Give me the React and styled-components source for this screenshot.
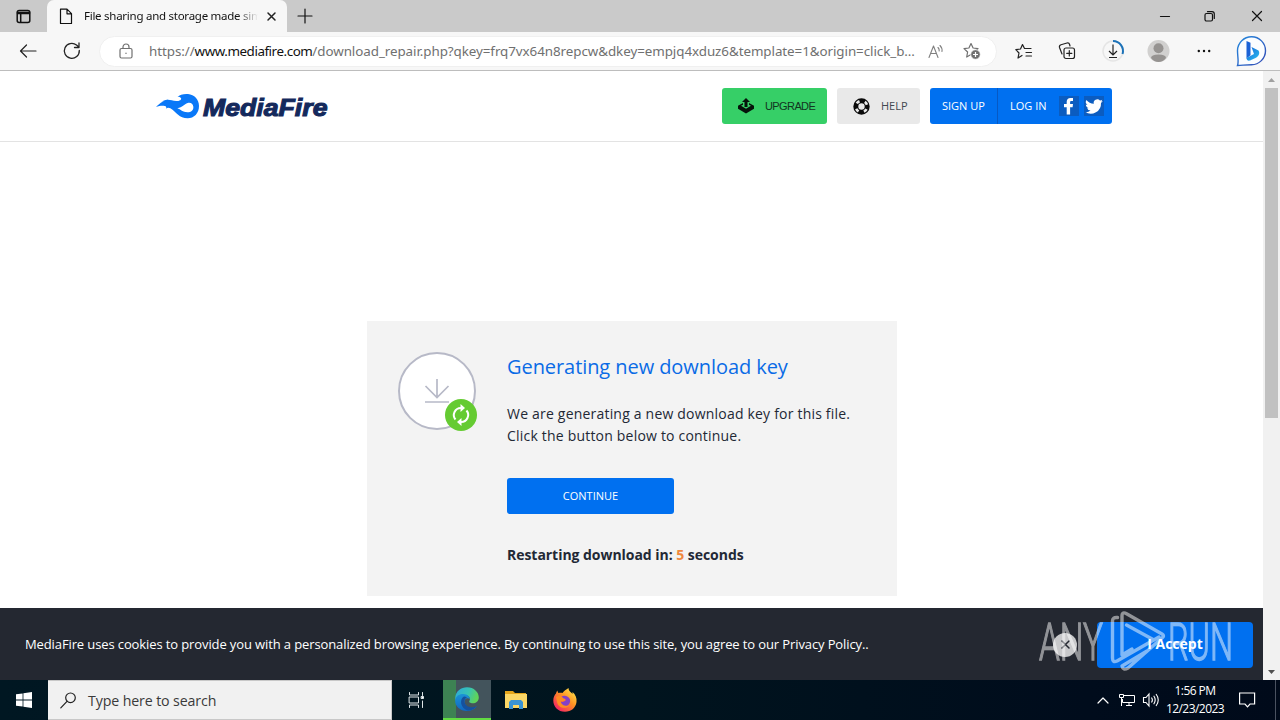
import React from 'react';
import styled, { createGlobalStyle } from 'styled-components';

const GlobalStyle = createGlobalStyle`
  * {
    box-sizing: border-box;
  }

  body {
    margin: 0;
    overflow: hidden;
    font-family: 'Open Sans', 'Noto Sans', sans-serif;
    background: #fff;
  }

  svg {
    display: block;
    flex: none;
    overflow: visible;
  }

  button {
    font: inherit;
    border: 0;
    padding: 0;
  }
`;

const Desktop = styled.div`
  position: relative;
  width: 1280px;
  height: 720px;
  display: flex;
  flex-direction: column;
  overflow: hidden;
`;

/* Text fitted to a line by letter spacing */
const Label = styled.span`
  font-family: ${({ $family }) => $family || 'inherit'};
  font-size: ${({ $size }) => $size}px;
  font-weight: ${({ $weight }) => $weight || 400};
  letter-spacing: ${({ $track }) => $track || 0}px;
  color: ${({ $color }) => $color || 'inherit'};
  padding-bottom: ${({ $lift }) => $lift || 0}px;
  white-space: nowrap;
`;

// ---------- Browser chrome ----------

const TabStrip = styled.div`
  height: 32px;
  flex: none;
  display: flex;
  background: #cacaca;
`;

const TabActions = styled.div`
  width: 47px;
  display: flex;
  align-items: center;
  padding-left: 16px;
`;

const Tab = styled.div`
  width: 240px;
  height: 32px;
  display: flex;
  align-items: center;
  padding-left: 12px;
  background: #f7f7f7;
  border-radius: 7px 7px 0 0;
`;

const TabTitle = styled.div`
  width: 174px;
  margin: 0 9px 0 11px;
  overflow: hidden;
  font-family: 'Noto Sans', sans-serif;
  font-size: 11.5px;
  line-height: 18px;
  letter-spacing: -0.26px;
  white-space: nowrap;
  color: #111;
  mask-image: linear-gradient(90deg, #000 88%, transparent 100%);
`;

const NewTab = styled.div`
  padding: 8px 0 0 10px;
`;

const WindowButtons = styled.div`
  margin-left: auto;
  display: flex;
  align-items: center;
  gap: 30px;
  padding-right: 16px;
`;

const Toolbar = styled.div`
  height: 39px;
  flex: none;
  display: flex;
  align-items: center;
  background: #f7f7f7;
  border-bottom: 1px solid #bdbdbd;
`;

const NavButtons = styled.div`
  width: 99px;
  display: flex;
  align-items: center;
  gap: 26px;
  padding-left: 19px;
`;

const AddressBar = styled.div`
  width: 898px;
  height: 31px;
  display: flex;
  align-items: center;
  padding: 0 13px 0 19px;
  background: #fff;
  border: 1px solid #f0f0f0;
  border-radius: 16px;
`;

const Url = styled.div`
  width: 768px;
  margin: 0 12px 0 16px;
  font-family: 'Noto Sans', sans-serif;
  font-size: 13.4px;
  line-height: 20px;
  letter-spacing: -0.07px;
  white-space: nowrap;
  color: #707070;

  b {
    font-weight: 400;
    letter-spacing: -0.45px;
    color: #111;
  }
`;

const ToolbarIcons = styled.div`
  flex: 1;
  display: flex;
  align-items: center;
  justify-content: space-between;
  padding: 0 13px 0 18px;
`;

// ---------- Page ----------

const Viewport = styled.div`
  height: 609px;
  flex: none;
  display: flex;
`;

const Page = styled.div`
  width: 1263px;
  display: flex;
  flex-direction: column;
  background: #fff;
`;

const Header = styled.header`
  height: 71px;
  flex: none;
  display: flex;
  align-items: center;
  padding: 0 151px 0 155px;
  border-bottom: 1px solid #e3e3e3;
`;

const LogoSlot = styled.a`
  padding-bottom: 1px;
`;

const HeaderButtons = styled.div`
  margin-left: auto;
  display: flex;
  gap: 10px;
`;

const HeaderButton = styled.button`
  width: ${({ $width }) => $width}px;
  height: 36px;
  display: flex;
  align-items: center;
  gap: 11px;
  padding-left: 16px;
  border-radius: 3px;
  background: ${({ $bg }) => $bg};
  color: ${({ $color }) => $color};
`;

const AccountGroup = styled.div`
  width: 182px;
  height: 36px;
  display: flex;
  align-items: center;
  border-radius: 3px;
  background: #0070f0;
  color: #fff;
`;

const SignUp = styled.a`
  width: 68px;
  height: 36px;
  display: flex;
  align-items: center;
  padding-left: 12px;
  border-right: 1px solid #0759c4;
`;

const LogIn = styled.div`
  flex: 1;
  display: flex;
  align-items: center;
  padding-left: 12px;
`;

const Social = styled.span`
  width: 20px;
  height: 20px;
  margin-left: ${({ $gap }) => $gap}px;
  display: flex;
  background: #0b5cc0;
`;

const Main = styled.main`
  flex: 1;
  display: flex;
  flex-direction: column;
  align-items: center;
  padding-top: 179px;
`;

const Card = styled.section`
  width: 530px;
  height: 275px;
  display: flex;
  margin-left: 1px;
  padding: 31px 0 0 31px;
  background: #f3f3f3;
`;

const CardBody = styled.div`
  width: 380px;
  margin-left: 31px;
`;

const Title = styled.h1`
  margin: 0;
  font-size: 20px;
  font-weight: 400;
  line-height: 30px;
  letter-spacing: -0.07px;
  color: #0a6be6;
`;

const Copy = styled.p`
  margin: 21px 0 0;
  font-size: 14px;
  line-height: 22px;
  letter-spacing: 0.2px;
  white-space: nowrap;
  color: #222835;
`;

const Continue = styled.button`
  display: flex;
  align-items: center;
  justify-content: center;
  width: 167px;
  height: 36px;
  margin: 31px 0 0;
  border-radius: 3px;
  background: #0070f0;
  color: #fff;
`;

const Countdown = styled.p`
  margin: 30px 0 0;
  font-size: 14px;
  font-weight: 700;
  line-height: 22px;
  letter-spacing: -0.04px;
  color: #222835;

  span {
    color: #f0883e;
  }
`;

const CookieBar = styled.footer`
  height: 72px;
  flex: none;
  display: flex;
  align-items: center;
  padding: 1px 10px 0 25px;
  background: #242831;
  color: #fff;
`;

const Dismiss = styled.button`
  width: 24px;
  height: 24px;
  margin: 0 20px 0 auto;
  display: flex;
  align-items: center;
  justify-content: center;
  border-radius: 50%;
  background: #c8c9cb;
`;

const Accept = styled.button`
  width: 156px;
  height: 46px;
  display: flex;
  align-items: center;
  justify-content: center;
  border-radius: 4px;
  background: #0070f0;
  color: #fff;
`;

const Scrollbar = styled.div`
  width: 17px;
  display: flex;
  flex-direction: column;
  align-items: center;
  padding: 7px 0 6px;
  background: #f1f1f1;
`;

const Thumb = styled.div`
  width: 13px;
  height: 330px;
  margin: 6px 0 auto;
  background: #c1c1c1;
`;

// ---------- Taskbar ----------

const Taskbar = styled.div`
  height: 40px;
  flex: none;
  display: flex;
  background: linear-gradient(90deg, #001722 0%, #00141e 50%, #000c1c 85%, #000a1a 100%);
  color: #fff;
`;

const TaskItem = styled.div`
  width: ${({ $width }) => $width || 49}px;
  display: flex;
  align-items: center;
  justify-content: center;
`;

const TaskView = styled(TaskItem)`
  padding-right: 2px;
`;

const ActiveTask = styled(TaskItem)`
  background: linear-gradient(90deg, #3d8253 0 13px, #43545c 13px);
  border-bottom: 2px solid #62dc42;
`;

const SearchBox = styled.div`
  width: 344px;
  display: flex;
  align-items: center;
  gap: 12px;
  padding-left: 12px;
  background: #f1f1f1;
  border: 1px solid #c8c8c8;
  border-left: 0;
`;

const Tray = styled.div`
  margin-left: auto;
  display: flex;
  align-items: center;
`;

const Clock = styled.div`
  width: 74px;
  font-family: 'Open Sans', sans-serif;
  font-size: 12px;
  line-height: 18px;
  letter-spacing: -0.55px;
  text-align: center;
  white-space: nowrap;
`;

const ShowDesktop = styled.div`
  width: 5px;
  height: 40px;
  margin-left: 20px;
  border-left: 1px solid #4a5260;
`;

const Watermark = styled.svg`
  position: absolute;
  left: 1036px;
  top: 606px;
  pointer-events: none;
`;

// ---------- Icons ----------

const Line = ({ w, h, d, sw = 1.2, color = '#222', children }) => (
  <svg width={w} height={h} viewBox={`0 0 ${w} ${h}`} fill="none" stroke={color} strokeWidth={sw} strokeLinecap="round" strokeLinejoin="round">
    {d && <path d={d} />}
    {children}
  </svg>
);

const STAR = 'M8 1.5 10.1 6 15 6.6 11.4 10 12.3 15 8 12.6 3.7 15 4.6 10 1 6.6 5.9 6z';

const Flame = () => (
  <svg width="45" height="26" viewBox="45 36 135 78">
    <path
      fill="#0a78f8"
      fillRule="evenodd"
      d="M48 77C58 70 66 60 80 57C90 55 98 61 112 60C122 59 126 54 122 50C119 47 115 47 112 48C119 41 131 38 144 39C163 41 177 55 177 75C177 97 162 112 143 112C117 112 110 94 91 82C86 79 81 80 78 83C80 79 79 76 74 75C65 73 57 76 48 77ZM112 82C122 85 128 94 142 94C154 94 161 87 160 77C159 68 151 63 143 66C132 70 128 79 112 82Z"
    />
    <path fill="#0a78f8" d="M61 62C72 60 73 56 84 56L78 64C72 60 67 62 61 62Z" />
  </svg>
);

const Logo = () => (
  <svg width="175" height="26" viewBox="0 0 175 26">
    <Flame />
    <text
      x="48"
      y="22.5"
      fontFamily="'Liberation Sans', sans-serif"
      fontSize="24.5"
      fontWeight="700"
      fontStyle="italic"
      fill="#14295c"
      stroke="#14295c"
      strokeWidth="1.1"
      textLength="124.500"
      lengthAdjust="spacingAndGlyphs"
    >
      MediaFire
    </text>
  </svg>
);

const UpgradeIcon = () => (
  <svg width="16" height="16" viewBox="0 0 16 16" fill="#06140b">
    <path d="M8 0l4 4H9.5v5h-3V4H4z" />
    <path d="M5 5L0 7.7v3L8 15.5l8-4.8v-3L11 5v1.7l2 1.1L8 10.8 3 7.8l2-1.1z" />
  </svg>
);

const HelpIcon = () => (
  <svg width="17" height="17" viewBox="0 0 17 17">
    <circle cx="8.5" cy="8.5" r="5.7" fill="none" stroke="#0a0a0a" strokeWidth="5" />
    <circle cx="8.5" cy="8.5" r="5.7" fill="none" stroke="#e9e9e9" strokeWidth="2.6" strokeDasharray="3.4 5.553" strokeDashoffset="-2.8" />
  </svg>
);

const FacebookIcon = () => (
  <svg width="20" height="20" viewBox="0 0 20 20" fill="#fff">
    <path d="M7.7 18.500v-7.300H5V8h2.700V5.800C7.700 3.400 9.100 2 11.500 2H14v3h-1.500c-1 0-1.400.5-1.400 1.300V8H14l-.4 3.200h-2.500v7.300z" />
  </svg>
);

const TwitterIcon = () => (
  <svg width="20" height="20" viewBox="0.5 -1 24 24" fill="#fff">
    <path d="M23 5.1a8.700 8.700 0 0 1-2.500.7 4.400 4.400 0 0 0 1.900-2.400 8.700 8.700 0 0 1-2.700 1A4.300 4.300 0 0 0 12.300 8.400 12.300 12.300 0 0 1 3.400 3.800a4.300 4.300 0 0 0 1.300 5.800 4.300 4.300 0 0 1-2-.5c0 2.100 1.500 3.900 3.500 4.300a4.300 4.300 0 0 1-2 .1 4.300 4.300 0 0 0 4.100 3A8.700 8.700 0 0 1 2 18.300 12.300 12.300 0 0 0 20.900 7.300 8.800 8.800 0 0 0 23 5.100z" />
  </svg>
);

const DownloadBadge = () => (
  <svg width="78" height="80" viewBox="0 0 78 80" fill="none">
    <circle cx="39" cy="39" r="38" fill="#fff" stroke="#b7b9c7" strokeWidth="2" />
    <path d="M39 27v19M27.5 34 39 45.500 50.500 34M27 50h24" stroke="#b7b9c7" strokeWidth="1.7" />
    <circle cx="63" cy="63" r="16" fill="#65cb32" />
    <g stroke="#fff" strokeWidth="2">
      <path d="M57.500 67.500A7 7 0 0 1 63 56" />
      <path d="M68.500 58.500A7 7 0 0 1 63 70" />
    </g>
    <path d="M62.500 52v8l4.500-4zM63.500 66v8L59 70z" fill="#fff" />
  </svg>
);

const BingIcon = () => (
  <svg width="31" height="32" viewBox="0 0 31 32">
    <defs>
      <linearGradient id="ring" x1="0" y1="0" x2="1" y2="1">
        <stop offset="0" stopColor="#2489dd" />
        <stop offset="1" stopColor="#344bb5" />
      </linearGradient>
      <linearGradient id="bing" x1="0" y1="0" x2="1" y2="1">
        <stop offset="0" stopColor="#1764d8" />
        <stop offset="1" stopColor="#28bff0" />
      </linearGradient>
    </defs>
    <path d="M1.5 30.5C3 27 1.5 22 1.5 15.5a14 14 0 1 1 14 14.2C9 29.7 6 30.5 1.5 30.5z" fill="#fbfdff" stroke="url(#ring)" strokeWidth="1.4" />
    <path d="M10.5 6l4 1.8v12.5l-4 3.200z" fill="#1b62d6" />
    <path d="M15.5 12l7 3.500c2 3-.5 6.500-3 7.500L14 25.500c-2 .6-3.500-.6-3.500-2.500l7.500-4z" fill="url(#bing)" />
  </svg>
);

const EdgeIcon = () => (
  <svg width="24" height="24" viewBox="0 0 24 24">
    <defs>
      <linearGradient id="edgeTop" x1="0" y1="0" x2="1" y2="0.3">
        <stop offset="0" stopColor="#2da8dc" />
        <stop offset="0.6" stopColor="#37c3b3" />
        <stop offset="1" stopColor="#5fd35a" />
      </linearGradient>
      <linearGradient id="edgeBase" x1="0" y1="0" x2="0" y2="1">
        <stop offset="0" stopColor="#1b93d6" />
        <stop offset="1" stopColor="#1067c0" />
      </linearGradient>
    </defs>
    <path d="M.3 10C1 4 6 .2 12 .2c7 0 11.8 5 11.8 10 0 4-3 6-6 6-2.6 0-4.300-1-3.300-2.500C16 11 13.500 8 9.500 8 5 8 1.500 10 .3 14z" fill="url(#edgeTop)" />
    <path d="M.2 13C.8 9 4.500 6.700 8.500 7c3.800.3 6.500 2.500 6.300 5-1.500-1.500-4-1-5 1-1.500 3.500 2 8 6.200 8 2.700 0 4.500-1 6-2-2.500 3.500-6 5-10 5C5 24-.5 19 .2 13z" fill="url(#edgeBase)" />
    <path d="M9 9.500c-5 3-3.500 11.500 3.500 14 4 .2 7.500-1.800 9.500-4.500-6 3-12 .2-12.500-4C9.300 13 10 11 12 10.500c-1-.8-2-1-3-1z" fill="#15519e" />
  </svg>
);

const ExplorerIcon = () => (
  <svg width="22" height="20" viewBox="0 0 22 20">
    <path d="M0 1h8l2 2h11v5H0z" fill="#e5a51b" />
    <path d="M0 4h22v14H0z" fill="#fcd766" />
    <path d="M4 19v-7l2-2h10l2 2v7h-4v-4H8v4z" fill="#3a93d3" />
    <path d="M8 15h6v3H8z" fill="#fcd766" />
  </svg>
);

const FirefoxIcon = () => (
  <svg width="24" height="24" viewBox="0 0 24 24">
    <defs>
      <linearGradient id="fox" x1="0.9" y1="0.1" x2="0.2" y2="0.9">
        <stop offset="0" stopColor="#ffe14a" />
        <stop offset="0.45" stopColor="#ff9222" />
        <stop offset="1" stopColor="#f5295f" />
      </linearGradient>
    </defs>
    <path d="M3 5.5C3.500 3.500 4 3 4.500 2.500c0 1 .5 2 1 2.500 1.500-.5 3-.3 4 0C11 3 13 1.500 15.500 0c0 2 1 3 2.500 4.500.6.500 1.200 1 1.500 1.500V4c3 2.500 4.500 6 4 10C22.700 20 18 23.800 12 23.800 5 23.800.2 18.500.3 12.500.3 9.500 1.500 7 3 5.500z" fill="url(#fox)" />
    <path d="M8.500 8.500c3-1.800 7-.5 8.300 2.500 1.200 3.500-1 7-4.800 7-3.500 0-5.500-2.500-5-5 1 1 2.500 1.300 4 .5l2-1.500c-2-.2-4-1.500-4.500-3.500z" fill="#8540c7" />
    <path d="M3 9c2-1.500 4-1.300 6-.3.5 1.300 1.800 2 3.800 2.300-1 2-3 2.500-5 2.300C8 17 13 19.500 17 17c-4 5-12 3-13-3-.3-2-.6-3-1-5z" fill="#ff8b22" />
  </svg>
);

function BrowserTabs() {
  return (
    <TabStrip>
      <TabActions>
        <Line w={15} h={15} sw={1.5} color="#111">
          <rect x="1.2" y="1.5" width="12.6" height="12" rx="2" />
          <path d="M1.5 3.5h12M1.5 4.5h12M4.7 5v8" />
        </Line>
      </TabActions>
      <Tab>
        <Line w={14} h={17} d="M1.5 1.2h6.5l4.500 4.500V15.500h-11zM8 1.500v4.300h4.300" color="#111" />
        <TabTitle>File sharing and storage made simple</TabTitle>
        <Line w={9} h={9} d="M1 1l7 7M8 1 1 8" sw={1.5} />
      </Tab>
      <NewTab>
        <Line w={16} h={16} d="M8 1v14M1 8h14" color="#111" />
      </NewTab>
      <WindowButtons>
        <Line w={16} h={12} d="M3.5 6.500h9" color="#111" />
        <Line w={11} h={11} color="#111">
          <rect x="2" y="2.5" width="7.500" height="7.500" rx="1.5" />
          <path d="M4.500.7H9A2.300 2.300 0 0 1 11.300 3v4.500" />
        </Line>
        <Line w={20} h={10} d="M8.5.5l9 9M17.500.5l-9 9" color="#111" />
      </WindowButtons>
    </TabStrip>
  );
}

function BrowserToolbar() {
  return (
    <Toolbar>
      <NavButtons>
        <Line w={18} h={14} d="M17 7H1.500M7.500 1 1.500 7l6 6" />
        <Line w={18} h={18} d="M16.300 8.500A7.500 7.500 0 1 1 13.500 3L15.800 5M16 1v4.500h-4.500" sw={1.3} />
      </NavButtons>
      <AddressBar>
        <Line w={14} h={16} color="#707070">
          <rect x="1" y="5.5" width="12" height="9.500" rx="1.5" />
          <path d="M4 5.500V4a3 3 0 0 1 6 0v1.500M7 10v.4" />
        </Line>
        <Url>
          https://<b>www.mediafire.com</b>/download_repair.php?qkey=frq7vx64n8repcw&amp;dkey=empjq4xduz6&amp;template=1&amp;origin=click_b...
        </Url>
        <Line w={17} h={15} d="M1 13.500 5.500 2l4.500 11.500M2.500 9.500h6M10 3.500q1.500 1.500 1.200 3.500M12 1.500q2.500 2.500 2 6" color="#808080" sw={1.1} />
        <svg width="38" height="18" viewBox="-18 0 38 18" fill="none" stroke="#707070" strokeWidth="1.2" strokeLinejoin="round">
          <path d={STAR} />
          <circle cx="12.5" cy="12.5" r="4.8" fill="#707070" stroke="#fff" strokeWidth="0.8" />
          <path d="M10 12.500h5M12.500 10v5" stroke="#fff" />
        </svg>
      </AddressBar>
      <ToolbarIcons>
        <Line w={18} h={16} d="M7 12.500 3 15l1-5L.8 6.600 5.500 6 7.500 1.500 9.500 5.500H16M11 9.500h5.500M11 13h5.500" />
        <Line w={18} h={18}>
          <rect x="6" y="6" width="10.5" height="10.5" rx="2" />
          <path d="M11.300 8.700v5.200M8.700 11.300h5.200M4 12 1.500 5.500Q1 3.500 3 2.800L9 1q2-.5 2.600 1.500L12 4" />
        </Line>
        <svg width="22" height="22" viewBox="0 0 22 22" fill="none">
          <circle cx="11" cy="11" r="10" stroke="#e5e5e5" strokeWidth="1.5" />
          <path d="M11 1A10 10 0 0 1 20.500 14" stroke="#1c72b8" strokeWidth="2" />
          <path d="M11 4.500v10M7 11l4 4 4-4M7 17.500h8" stroke="#222" strokeWidth="1.2" />
        </svg>
        <svg width="22" height="22" viewBox="1.500 0 22 22">
          <circle cx="11" cy="11" r="11" fill="#d1d0cf" />
          <circle cx="11" cy="8.3" r="5" fill="#969391" />
          <path d="M3.500 18q0-3.500 7.500-3.500t7.500 3.500Q15.500 22 11 22T3.500 18z" fill="#969391" />
        </svg>
        <svg width="14" height="4" viewBox="0 0 14 4" fill="#111">
          <circle cx="1.8" cy="2" r="1.2" />
          <circle cx="7" cy="2" r="1.2" />
          <circle cx="12.2" cy="2" r="1.2" />
        </svg>
        <BingIcon />
      </ToolbarIcons>
    </Toolbar>
  );
}

function SiteHeader() {
  return (
    <Header>
      <LogoSlot><Logo /></LogoSlot>
      <HeaderButtons>
        <HeaderButton $width={105} $bg="#36cf67" $color="#12351f">
          <UpgradeIcon />
          <Label $size={11} $track={-0.6} $family="'Liberation Sans', sans-serif">UPGRADE</Label>
        </HeaderButton>
        <HeaderButton $width={83} $bg="#e9e9e9" $color="#424850">
          <HelpIcon />
          <Label $size={11} $lift={2}>HELP</Label>
        </HeaderButton>
        <AccountGroup>
          <SignUp>
            <Label $size={11} $lift={2}>SIGN UP</Label>
          </SignUp>
          <LogIn>
            <Label $size={11} $lift={2}>LOG IN</Label>
            <Social $gap={12}><FacebookIcon /></Social>
            <Social $gap={5}><TwitterIcon /></Social>
          </LogIn>
        </AccountGroup>
      </HeaderButtons>
    </Header>
  );
}

function DownloadCard() {
  return (
    <Card>
      <DownloadBadge />
      <CardBody>
        <Title>Generating new download key</Title>
        <Copy>
          We are generating a new download key for this file.
          <br />
          Click the button below to continue.
        </Copy>
        <Continue>
          <Label $size={11} $lift={2}>CONTINUE</Label>
        </Continue>
        <Countdown>
          Restarting download in: <span>5</span> seconds
        </Countdown>
      </CardBody>
    </Card>
  );
}

function WindowsTaskbar() {
  return (
    <Taskbar>
      <TaskItem $width={48}>
        <svg width="16" height="16" viewBox="0 0 16 16" fill="#fff">
          <path d="M0 2.300 6.600 1.400v6.200H0zM7.400 1.200 16 0v7.600H7.400zM0 8.400h6.600v6.200L0 13.700zM7.400 8.400H16V16l-8.600-1.200z" />
        </svg>
      </TaskItem>
      <SearchBox>
        <Line w={16} h={17} color="#222">
          <circle cx="10.5" cy="5.8" r="4.8" />
          <path d="M7 9.300.8 15.800" />
        </Line>
        <Label $size={14.2} $track={-0.12} $color="#3a3a3a">Type here to search</Label>
      </SearchBox>
      <TaskView $width={51}>
        <Line w={17} h={16} color="#dfe6e8" sw={1}>
          <path d="M1.500.5v2.500h9V.5M1.500 15.500V13h9v2.500M14.500.5v3M14.500 9v6.500" />
          <rect x="1.5" y="5" width="9" height="6" />
          <rect x="13.5" y="4.5" width="2" height="2" fill="#fff" />
        </Line>
      </TaskView>
      <ActiveTask $width={48}><EdgeIcon /></ActiveTask>
      <TaskItem><ExplorerIcon /></TaskItem>
      <TaskItem><FirefoxIcon /></TaskItem>
      <Tray>
        <Line w={12} h={7} d="M1 6l5-5 5 5" color="#fff" />
        <svg width="27" height="16" viewBox="-9 0 27 16" fill="none" stroke="#fff">
          <path d="M6 3.500h10.500v7H4.500V7M8 13.500h6M11 10.500v3M1.500 2.500h4v3h-4zM3.500 6v8" />
        </svg>
        <svg width="22" height="16" viewBox="-6 0 22 16" fill="none" stroke="#fff" strokeWidth="1.1">
          <path d="M1.500 5.500H4l3-3.500v12L4 10.500H1.500zM9.500 5.500q1.800 2.500 0 5M11.700 3.800q3 4.200 0 8.400M14 2q4.500 6 0 12" />
        </svg>
        <Clock>
          1:56 PM
          <br />
          12/23/2023
        </Clock>
        <svg width="23" height="16" viewBox="-7 0 23 16" fill="none" stroke="#fff" strokeWidth="1.2">
          <path d="M.6 1h15v11h-4.600l-2.500 2.800L6 12H.6z" />
        </svg>
        <ShowDesktop />
      </Tray>
    </Taskbar>
  );
}

function AnyRunMark() {
  return (
    <Watermark width="200" height="70" viewBox="0 0 200 70" fill="none" opacity="0.5">
      <g fontFamily="Roboto, sans-serif" fontSize="52" fontWeight="300" fill="#fff" stroke="#fff" strokeWidth="1.3">
        <text x="3" y="53.5" textLength="64" lengthAdjust="spacingAndGlyphs">ANY</text>
        <text x="132" y="53.5" textLength="65" lengthAdjust="spacingAndGlyphs">RUN</text>
      </g>
      <path
        d="M81.500 11.500Q76.500 11 76.500 15V52Q76.500 57 81 55L123 31M86 49V10Q86 5 91 8L126 28Q129 30 126 32L92 62Q87 65 86 60L111 45M90.500 19 118 34M86 49 96 43"
        stroke="#fff"
        strokeWidth="3.4"
        strokeLinejoin="round"
        strokeLinecap="round"
      />
    </Watermark>
  );
}

export default function App() {
  return (
    <Desktop>
      <GlobalStyle />
      <BrowserTabs />
      <BrowserToolbar />
      <Viewport>
        <Page>
          <SiteHeader />
          <Main>
            <DownloadCard />
          </Main>
          <CookieBar>
            <Label $size={13} $track={-0.112} $lift={2}>
              MediaFire uses cookies to provide you with a personalized browsing experience. By continuing to use this site, you agree to our Privacy Policy..
            </Label>
            <Dismiss>
              <Line w={9} h={9} d="M1 1l7 7M8 1 1 8" sw={1.5} color="#242831" />
            </Dismiss>
            <Accept>
              <Label $size={14} $weight={700} $lift={2}>I Accept</Label>
            </Accept>
          </CookieBar>
        </Page>
        <Scrollbar>
          <svg width="7" height="4" viewBox="0 0 7 4"><path d="M0 4 3.500 0 7 4z" fill="#a0a0a0" /></svg>
          <Thumb />
          <svg width="7" height="4" viewBox="0 0 7 4"><path d="M0 0h7L3.500 4z" fill="#505050" /></svg>
        </Scrollbar>
      </Viewport>
      <WindowsTaskbar />
      <AnyRunMark />
    </Desktop>
  );
}
